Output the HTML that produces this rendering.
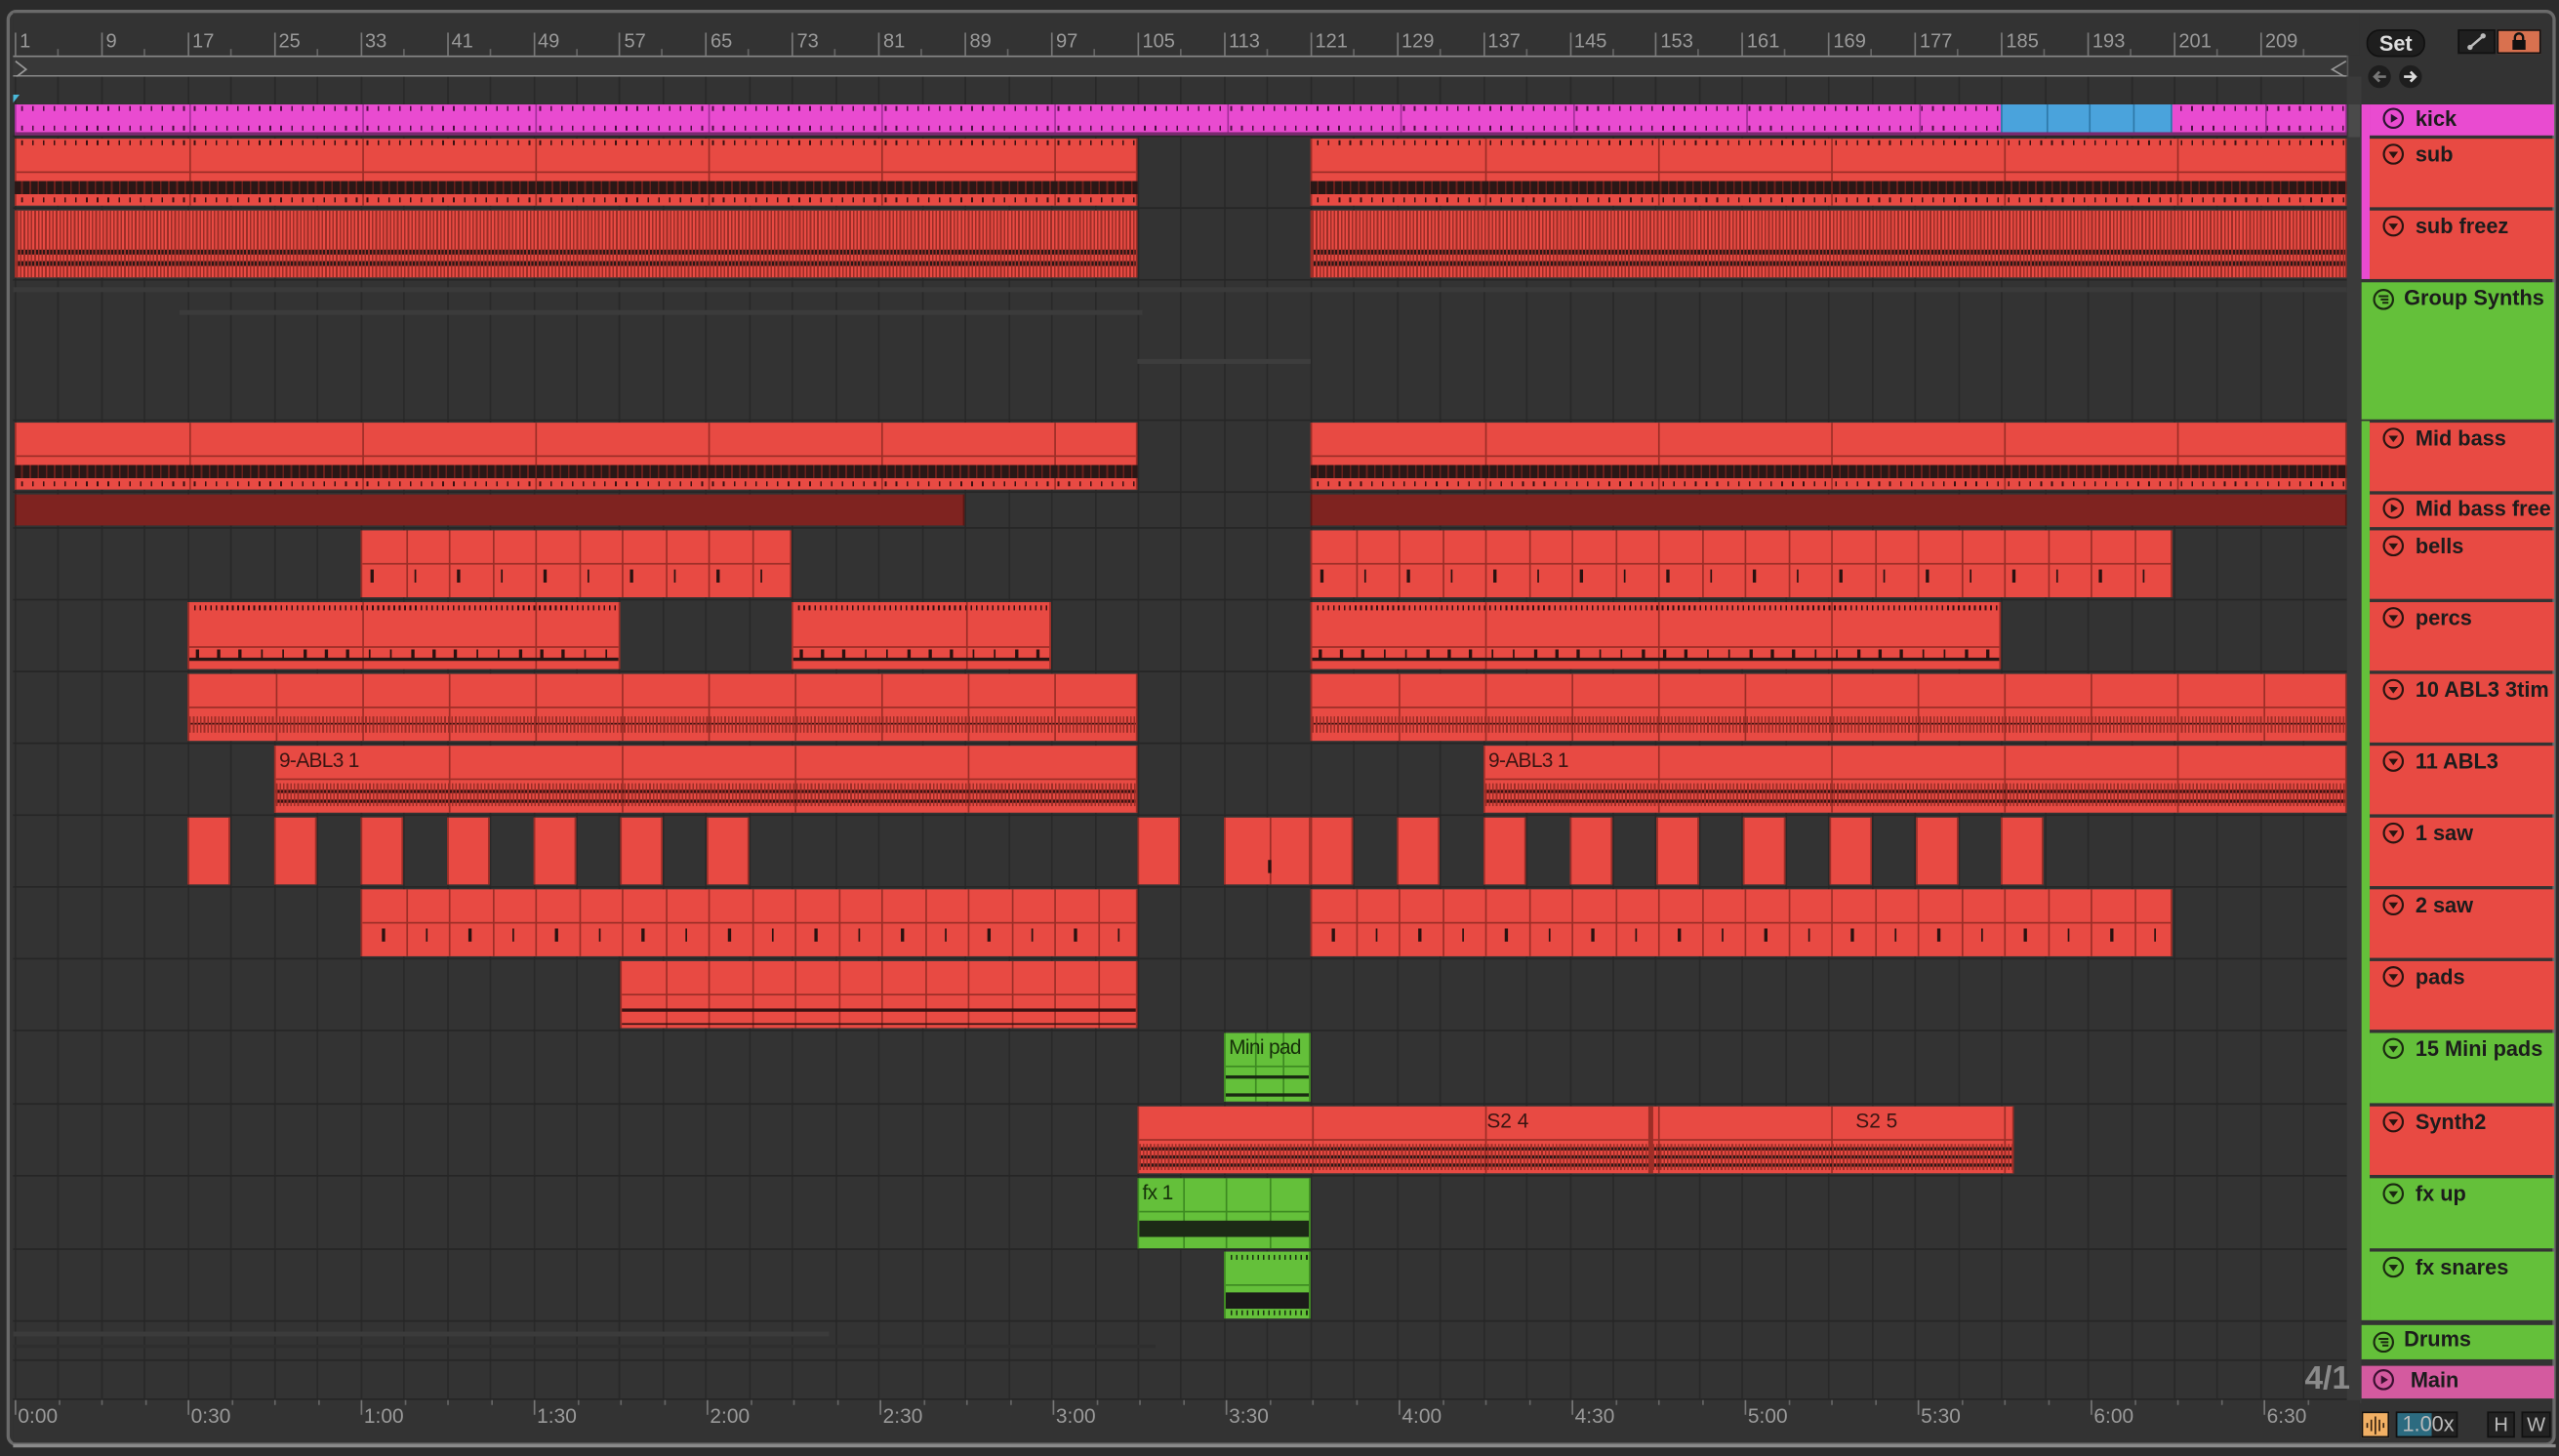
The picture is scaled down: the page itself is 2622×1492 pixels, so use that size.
<!DOCTYPE html>
<html><head><meta charset="utf-8">
<style>
html,body{margin:0;padding:0;background:#2b2b2b;overflow:hidden;width:2622px;height:1492px}
#s{position:absolute;left:0;top:0;width:1568px;height:892px;transform:scale(1.67219);transform-origin:0 0;font-family:"Liberation Sans",sans-serif}
.a{position:absolute;box-sizing:border-box}
.lbl{font-size:12.5px;color:#3a1512;white-space:nowrap;overflow:hidden;letter-spacing:-0.4px}
.hd{font-size:13px;font-weight:bold;color:#1c1c1c;white-space:nowrap}
</style></head><body><div id="s"></div>
<script>
const S=document.getElementById('s');
function d(x,y,w,h,st,html){const e=document.createElement('div');e.className='a';e.style.cssText=`left:${x}px;top:${y}px;width:${w}px;height:${h}px;`+(st||'');if(html)e.innerHTML=html;S.appendChild(e);return e;}
const RED='#e84a43',DK='#9c2e27',GR='#64c03a',PK='#e94bd0';
d(4,6,1562,880,'border:2px solid #6a6a6a;border-radius:6px;background:#333;');
d(8,8,1438,26,'background:#333;');
const bx=b=>9+(b-1)*6.615;
for(let b=1;b<=209;b+=8){const x=bx(b);d(x,20,1,14,'background:#777;');d(x+3,18,30,14,'color:#9a9a9a;font-size:12px;',String(b));d(x+26,30,1,4,'background:#666;');}
d(8,34,1430,1,'background:#888;');d(8,46,1430,1,'background:#888;');d(8,35,1430,11,'background:#383838;');
d(9,35,8,11,'',`<svg width="8" height="11"><path d="M0.5 0.5 L7 5.5 L0.5 10.5" stroke="#999" fill="none"/></svg>`);
d(1428,35,10,11,'',`<svg width="10" height="11"><path d="M9.5 0.5 L1 5.5 L9.5 10.5" stroke="#999" fill="none"/></svg>`);
d(1438,34,1,30,'background:#555;');
d(8,47,1430,813,'background:#333;');
for(let x=9;x<1438;x+=26.46){d(x,47,1,813,'background:#292929;');}
d(8,58,4,5,'background:#4ab8d8;clip-path:polygon(0 0,100% 0,0 100%);');
const T=[['kick',63,20,'p'],['sub',84,43,'r'],['sub freez',128,43,'r'],['Group Synths',172,85,'g'],['Mid bass',258,43,'r'],['Mid bass free',302,21,'r'],['bells',324,43,'r'],['percs',368,43,'r'],['10 ABL3 3tim',412,43,'r'],['11 ABL3',456,43,'r'],['1 saw',500,43,'r'],['2 saw',544,43,'r'],['pads',588,43,'r'],['15 Mini pads',632,44,'g'],['Synth2',677,43,'r'],['fx up',721,44,'g'],['fx snares',766,43,'g'],['Drums',811,22,'g'],['Main',836,21,'m']];
T.forEach(t=>{d(8,t[1]+t[2]-0.5,1430,1.5,'background:#262626;');});
d(8,176,1430,3,'background:#3a3a3a;');d(110,190,590,3,'background:#3b3b3b;');d(697,220,106,3,'background:#3d3d3d;');d(8,816,500,3,'background:#3b3b3b;');d(8,824,700,2,'background:#2e2e2e;');
function clip(x1,x2,y,h,col,o){o=o||{};const bd=o.bd||DK;const e=d(x1,y,x2-x1,h,`background:${col};border-left:1px solid ${bd};border-right:1px solid ${bd};overflow:hidden;`);
 let inner='';
 if(o.seg){for(let x=o.seg;x<x2-x1;x+=o.seg)inner+=`<div class="a" style="left:${x}px;top:0;width:1px;height:${h}px;background:${bd}"></div>`;}
 const tp=o.tp||6.615;
 if(o.ticks!==undefined)inner+=`<div class="a" style="left:3px;top:${o.ticks}px;width:100%;height:3px;background:repeating-linear-gradient(90deg,${o.tc||'#3a1010'} 0 1px,transparent 1px ${tp}px)"></div>`;
 if(o.ticks2!==undefined)inner+=`<div class="a" style="left:3px;top:${o.ticks2}px;width:100%;height:3px;background:repeating-linear-gradient(90deg,${o.tc||'#3a1010'} 0 1px,transparent 1px ${tp}px)"></div>`;
 (o.bands||[]).forEach(b=>{inner+=`<div class="a" style="left:0;top:${b[0]}px;width:100%;height:${b[1]}px;background:${b[2]||'#2a1716'}"></div>`;});
 if(o.hl!==undefined)inner+=`<div class="a" style="left:0;top:${o.hl}px;width:100%;height:1px;background:${bd}"></div>`;
 if(o.dense)inner+=`<div class="a" style="left:0;top:${o.dense[0]}px;width:100%;height:${o.dense[1]}px;background:repeating-linear-gradient(90deg,${bd} 0 1px,transparent 1px 2.2px)"></div>`;
 if(o.marks)for(let x=o.marks[0];x<x2-x1;x+=o.marks[1])inner+=`<div class="a" style="left:${x}px;top:${o.marks[2]}px;width:1.5px;height:${o.marks[3]}px;background:#2a1210"></div>`;
 if(o.lab)inner+=`<div class="a lbl" style="left:2px;top:2px;color:${o.lc||'#3a1512'}">${o.lab}</div>`;
 e.innerHTML=inner;return e;}
clip(9,1438,64,18,PK,{bd:'#a3309a',seg:106,ticks:1,ticks2:13,tc:'#4a1040'});
clip(1226,1331,64,18,'#4aa3dc',{bd:'#2e78a8',seg:26.5});
d(9,81,1429,2,'background:#7a2a70;');
[[9,697],[803,1438]].forEach(r=>{clip(r[0],r[1],85,41,RED,{seg:106,ticks:1,ticks2:36,hl:20,bands:[[26,8]]});
 clip(r[0],r[1],129,41,RED,{dense:[0,41],bands:[[24,3],[31,3]]});});
[[9,697],[803,1438]].forEach(r=>{d(r[0],111,r[1]-r[0],8,'background:repeating-linear-gradient(90deg,#2a1716 0 4px,#6b201c 4px 5px);');});
[[9,697],[803,1438]].forEach(r=>{clip(r[0],r[1],259,41,RED,{seg:106,ticks:36,hl:20,bands:[[26,8]]});d(r[0],285,r[1]-r[0],8,'background:repeating-linear-gradient(90deg,#2a1716 0 4px,#6b201c 4px 5px);');});
clip(9,591,303,19,'#7f2320',{bd:'#5a1714'});clip(803,1438,303,19,'#7f2320',{bd:'#5a1714'});
[[221,485],[803,1331]].forEach(r=>clip(r[0],r[1],325,41,RED,{seg:26.5,hl:20,marks:[5,26.5,24,8]}));
[[115,380],[485,644],[803,1226]].forEach(r=>clip(r[0],r[1],369,41,RED,{seg:106,ticks:2,tp:3.3,hl:27,bands:[[34,2]],marks:[4,13.2,29,6]}));
[[115,697],[803,1438]].forEach(r=>clip(r[0],r[1],413,41,RED,{seg:53,hl:20,dense:[26,10],bands:[[30,1,'#3a1010']]}));
[[168,697,'9-ABL3 1'],[909,1438,'9-ABL3 1']].forEach(r=>{clip(r[0],r[1],457,41,RED,{seg:106,hl:20,lab:r[2],dense:[23,14],bands:[[27,2,'#3a1212'],[33,2,'#3a1212']]});});
[115,168,221,274,327,380,433,697,803,856,909,962,1015,1068,1121,1174,1226].forEach(x=>clip(x,x+26,501,41,RED,{}));
clip(750,803,501,41,RED,{seg:26.5,marks:[26,100,26,8]});
[[221,697],[803,1331]].forEach(r=>clip(r[0],r[1],545,41,RED,{seg:26.5,hl:20,marks:[12,26.5,24,8]}));
clip(380,697,589,41,RED,{seg:26.5,hl:20,bands:[[29,2,'#3a1212'],[38,1,'#3a1212']]});
clip(750,803,633,42,GR,{bd:'#3e8a22',lab:'Mini pad',lc:'#16300a',hl:20,seg:17.7,bands:[[26,2,'#1a2a12'],[37,2,'#1a2a12']]});
clip(697,1234,678,41,RED,{seg:106,hl:20,dense:[23,16],bands:[[25,2,'#2a1716'],[30,2,'#2a1716'],[35,2,'#2a1716']]});
d(1010,678,3,41,'background:#9c2e27;');
d(911,680,40,14,'font-size:12.5px;color:#3a1512;','S2 4');d(1137,680,40,14,'font-size:12.5px;color:#3a1512;','S2 5');
clip(697,803,722,43,GR,{bd:'#3e8a22',lab:'fx 1',lc:'#16300a',hl:20,seg:26.5,bands:[[26,10,'#1c2a16']]});
clip(750,803,767,41,GR,{bd:'#3e8a22',ticks:2,ticks2:36,tp:3.3,tc:'#1a3010',hl:20,bands:[[25,10,'#1c1c1a']]});
d(1438,47,9,813,'background:#3a3a3a;');d(1439,64,7,20,'background:#4a4a4a;');
const IC={p:'<svg width="13" height="13" style="position:absolute;left:8px;top:2px"><circle cx="6.5" cy="6.5" r="5.8" fill="none" stroke="#2a1430" stroke-width="1.3"/><path d="M5 3.8 L9.3 6.5 L5 9.2Z" fill="#2a1430"/></svg>',
 r:'<svg width="13" height="13" style="position:absolute;left:8px;top:3px"><circle cx="6.5" cy="6.5" r="5.8" fill="none" stroke="#2a1410" stroke-width="1.3"/><path d="M3.6 5 L9.4 5 L6.5 9Z" fill="#2a1410"/></svg>',
 gr:'<svg width="13" height="13" style="position:absolute;left:8px;top:3px"><circle cx="6.5" cy="6.5" r="5.8" fill="none" stroke="#1a2a10" stroke-width="1.3"/><path d="M3.6 5 L9.4 5 L6.5 9Z" fill="#1a2a10"/></svg>',
 grp:'<svg width="13" height="13" style="position:absolute;left:6px;top:4px"><circle cx="6.5" cy="6.5" r="5.8" fill="none" stroke="#1a2a10" stroke-width="1.3"/><path d="M3.5 4.5h6M4.8 6.5h4.7M5.8 8.5h3.7" stroke="#1a2a10" stroke-width="1.2"/></svg>'};
d(1447,64,5,107,`background:${PK};`);
d(1447,258,5,551,`background:${GR};`);
T.forEach(t=>{const [n,y,h,k]=t;let x=1452,col=RED,ic=IC.r,tx=1480;
 if(k=='p'){col=PK;ic=IC.p;}
 if(k=='g'){col=GR;ic=IC.gr;}
 if(n=='Group Synths'||n=='Drums'){x=1447;ic=IC.grp;tx=1473;}
 if(k=='m'){x=1447;col='#d45a9f';ic=IC.p.replace('left:8px','left:6px').replace(/#2a1430/g,'#3a1030');tx=1477;}
 if(n=='Mid bass free')ic=IC.p.replace(/#2a1430/g,'#2a1410');
 const hh=(n=='Drums')?22:(k=='m'?21:h);
 const e=d(x,y+1,1565-x,hh-1.5,`background:${col};`);
 e.innerHTML=ic.replace(/left:(\d+)px/,(m,a)=>'left:'+(x==1447?+a+1:a)+'px')+`<div class="a hd" style="left:${tx-x}px;top:${k=='p'||n=='Mid bass free'||n=='Drums'||k=='m'?1:2}px">${n}</div>`;
});
d(1450,18,36,17,'background:#1e1e1e;border:1px solid #111;border-radius:8px;color:#ddd;font-size:13px;font-weight:bold;text-align:center;line-height:15px;','Set');
d(1506,18,23,15,'background:#1f1f1f;border:1px solid #111;','<svg width="21" height="13"><path d="M7 9.5 L14 3.5" stroke="#bbb" stroke-width="1.5"/><circle cx="6.5" cy="10" r="1.6" fill="#bbb"/><circle cx="14.5" cy="3" r="1.6" fill="#bbb"/></svg>');
d(1530,18,27,15,'background:#d9714f;border:1px solid #111;','<svg width="25" height="13"><rect x="8.5" y="5.5" width="8" height="6" fill="#111"/><path d="M10 6 V4 a2.5 2.5 0 0 1 5 0 V6" stroke="#111" stroke-width="1.4" fill="none"/></svg>');
d(1451,40,14,14,'background:#1e1e1e;border-radius:50%;','<svg width="14" height="14"><path d="M11 7 H4 M7 4 L4 7 L7 10" stroke="#777" stroke-width="1.6" fill="none"/></svg>');
d(1470,40,14,14,'background:#1e1e1e;border-radius:50%;','<svg width="14" height="14"><path d="M3 7 H10 M7 4 L10 7 L7 10" stroke="#ddd" stroke-width="1.6" fill="none"/></svg>');
d(1396,834,44,24,'color:#8a8a8a;font-size:20px;font-weight:bold;text-align:right;','4/1');
d(8,858,1438,26,'background:#333;');
const tl=['0:00','0:30','1:00','1:30','2:00','2:30','3:00','3:30','4:00','4:30','5:00','5:30','6:00','6:30'];
tl.forEach((t,i)=>{const x=9+i*106;d(x,858,1,9,'background:#777;');d(x+2,861,40,14,'color:#9a9a9a;font-size:12.5px;',t);
 for(let j=1;j<4;j++){const xx=x+j*26.5;if(xx<1438)d(xx,858,1,3,'background:#666;');}});
d(8,885,1558,2,'background:#8a8a8a;');
d(1447,865,17,16,'background:#f2b064;border:1px solid #111;','<svg width="15" height="14"><path d="M2.5 6v3M5 4v7M7.5 2v11M10 4v7M12.5 6v3" stroke="#3a2410" stroke-width="1"/></svg>');
d(1468,865,38,16,'background:#222;border:1px solid #111;','<div class="a" style="left:0;top:0;width:21px;height:14px;background:#2c6b80"></div><div class="a" style="left:3px;top:0;color:#bbb;font-size:13px;line-height:14px">1.00x</div>');
d(1524,865,17,16,'background:#222;border:1px solid #111;color:#bbb;font-size:12px;text-align:center;line-height:14px;','H');
d(1545,865,18,16,'background:#222;border:1px solid #111;color:#bbb;font-size:12px;text-align:center;line-height:14px;','W');
</script></body></html>
